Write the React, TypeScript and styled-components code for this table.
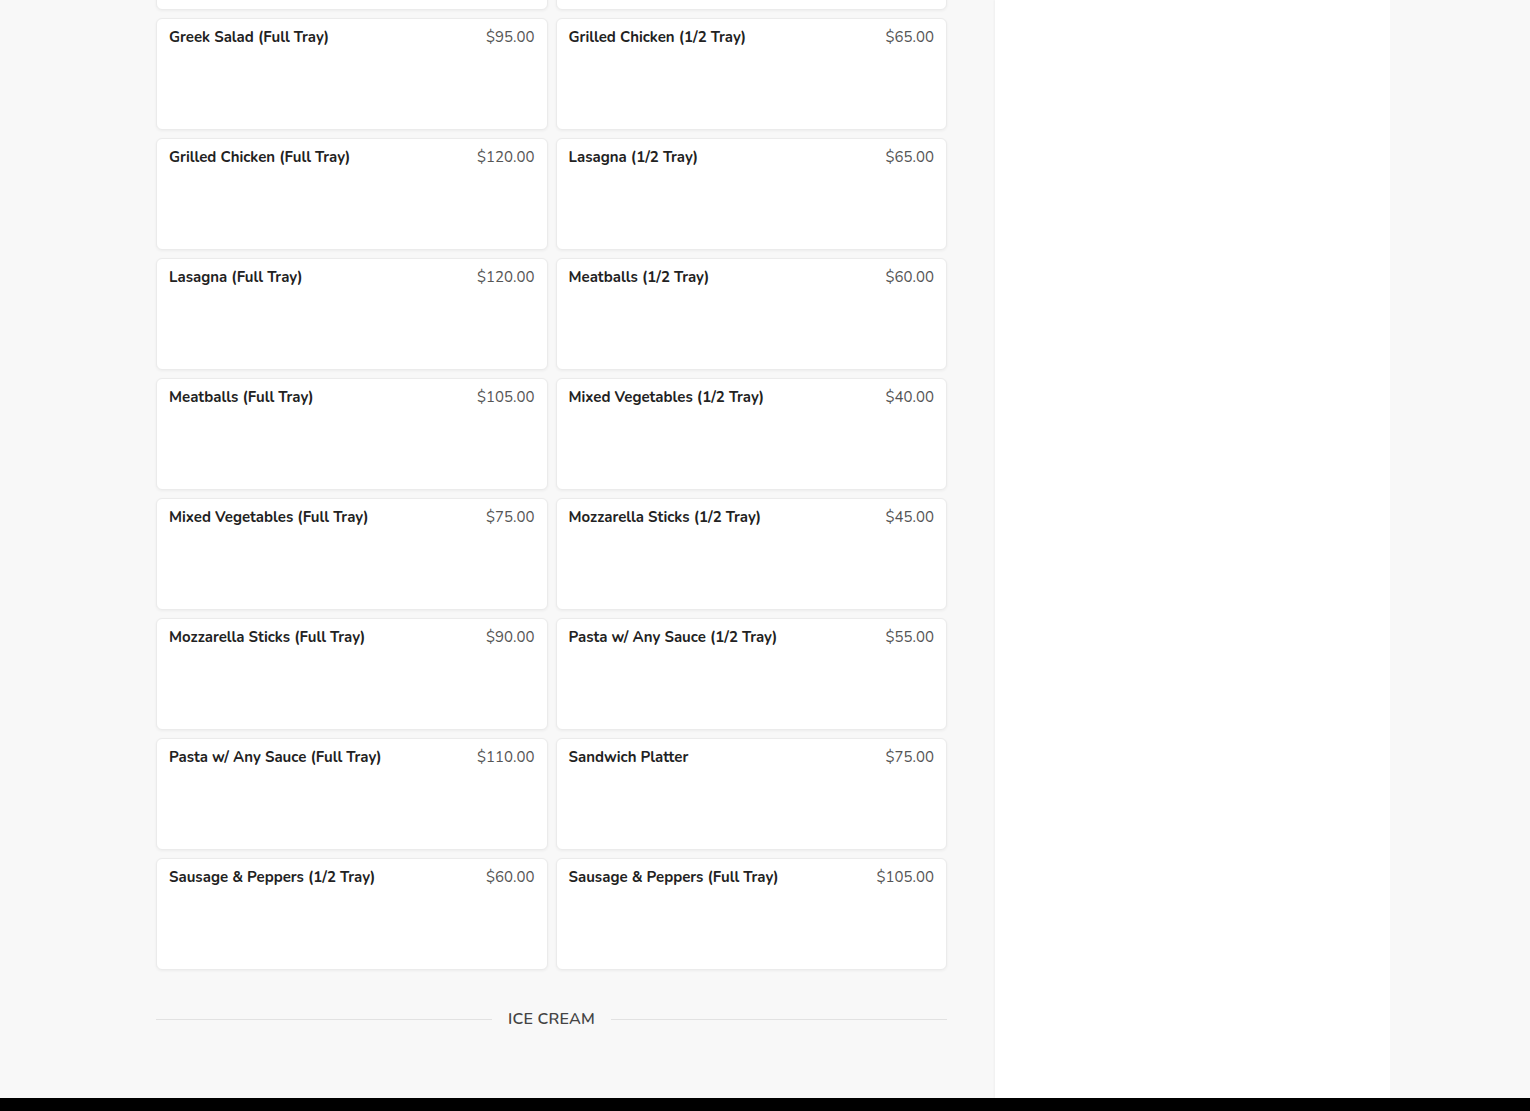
import React from "react";
import styled, { createGlobalStyle } from "styled-components";

const Global = createGlobalStyle`
  html, body { margin: 0; padding: 0; background: #f8f8f8; }
  body { font-family: "Nunito", Lato, "Noto Sans", sans-serif; overflow: hidden; }
`;

const Page = styled.div`
  height: 1111px;
  display: flex;
  flex-direction: column;
  overflow: hidden;
`;

const Body = styled.div`
  flex: 1;
  display: flex;
  overflow: hidden;
  background: #f8f8f8;
`;

const Main = styled.main`
  width: 995px;
  box-sizing: border-box;
  padding-left: 156px;
  padding-right: 48px;
`;

const Sidebar = styled.aside`
  width: 395px;
  background: #ffffff;
  box-shadow: -1px 0 2px rgba(0, 0, 0, 0.04);
`;

const Grid = styled.div`
  margin-top: -102px;
  display: grid;
  grid-template-columns: 1fr 1fr;
  gap: 8px;
`;

const Card = styled.div`
  height: 112px;
  box-sizing: border-box;
  background: #fff;
  border: 1px solid #ebebeb;
  border-radius: 6px;
  box-shadow: 0 1px 3px rgba(0, 0, 0, 0.05);
  padding: 8px 12px;
  display: flex;
  justify-content: space-between;
  align-items: flex-start;
`;

const Name = styled.span`
  font-size: 15px;
  line-height: 20px;
  font-weight: 700;
  color: #222;
`;

const Price = styled.span`
  font-size: 15px;
  line-height: 20px;
  font-weight: 400;
  color: #555;
`;

const Section = styled.div`
  display: flex;
  align-items: center;
  gap: 16px;
  margin-top: 39px;
  &::before, &::after {
    content: "";
    flex: 1;
    height: 1px;
    background: #e2e2e2;
  }
`;

const SectionTitle = styled.h2`
  margin: 0;
  font-size: 16px;
  line-height: 20px;
  font-weight: 600;
  color: #444;
  text-transform: uppercase;
  letter-spacing: 0.2px;
`;

const Footer = styled.footer`
  height: 13px;
  background: #000;
`;

const items: [string, string][] = [
  ["", ""],
  ["", ""],
  ["Greek Salad (Full Tray)", "$95.00"],
  ["Grilled Chicken (1/2 Tray)", "$65.00"],
  ["Grilled Chicken (Full Tray)", "$120.00"],
  ["Lasagna (1/2 Tray)", "$65.00"],
  ["Lasagna (Full Tray)", "$120.00"],
  ["Meatballs (1/2 Tray)", "$60.00"],
  ["Meatballs (Full Tray)", "$105.00"],
  ["Mixed Vegetables (1/2 Tray)", "$40.00"],
  ["Mixed Vegetables (Full Tray)", "$75.00"],
  ["Mozzarella Sticks (1/2 Tray)", "$45.00"],
  ["Mozzarella Sticks (Full Tray)", "$90.00"],
  ["Pasta w/ Any Sauce (1/2 Tray)", "$55.00"],
  ["Pasta w/ Any Sauce (Full Tray)", "$110.00"],
  ["Sandwich Platter", "$75.00"],
  ["Sausage & Peppers (1/2 Tray)", "$60.00"],
  ["Sausage & Peppers (Full Tray)", "$105.00"],
];

export default function App() {
  return (
    <Page>
      <Global />
      <Body>
        <Main>
          <Grid>
            {items.map(([n, p], i) => (
              <Card key={i}>
                {n && <Name>{n}</Name>}
                {p && <Price>{p}</Price>}
              </Card>
            ))}
          </Grid>
          <Section>
            <SectionTitle>Ice Cream</SectionTitle>
          </Section>
        </Main>
        <Sidebar />
      </Body>
      <Footer />
    </Page>
  );
}
